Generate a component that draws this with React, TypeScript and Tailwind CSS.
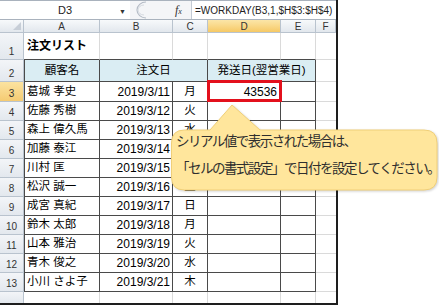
const orders = [
  ["葛城 孝史", "2019/3/11", "月"],
  ["佐藤 秀樹", "2019/3/12", "火"],
  ["森上 偉久馬", "2019/3/13", "水"],
  ["加藤 泰江", "2019/3/14", "木"],
  ["川村 匡", "2019/3/15", "金"],
  ["松沢 誠一", "2019/3/16", "土"],
  ["成宮 真紀", "2019/3/17", "日"],
  ["鈴木 太郎", "2019/3/18", "月"],
  ["山本 雅治", "2019/3/19", "火"],
  ["青木 俊之", "2019/3/20", "水"],
  ["小川 さよ子", "2019/3/21", "木"],
];

const cell = "box-border shrink-0 flex items-center border-r border-b";
const dark = "border-[#4a4a4a]";
const light = "border-[#dadada]";

function RowHead({ n, active = false }: { n: number; active?: boolean }) {
  return (
    <div
      className={`box-border w-[24px] shrink-0 flex items-end justify-center pb-[1px] border-r border-b border-[#b9c3ce] text-[10px] leading-[12px] text-[#333] ${
        active
          ? "bg-gradient-to-b from-[#fbe3a0] to-[#f5cb72]"
          : "bg-gradient-to-b from-[#f3f5f8] to-[#e3e8ee]"
      }`}
    >
      {n}
    </div>
  );
}

function ColHead({ label, w, active = false }: { label: string; w: string; active?: boolean }) {
  return (
    <div
      className={`box-border ${w} shrink-0 flex items-center justify-center border-r border-b border-[#b9c3ce] text-[10px] text-[#333] ${
        active
          ? "bg-gradient-to-b from-[#fbe6a8] to-[#f6c964]"
          : "bg-gradient-to-b from-[#f7f9fb] to-[#e2e7ed]"
      }`}
    >
      {label}
    </div>
  );
}

function DataRow({ n, name, date, day, first }: { n: number; name: string; date: string; day: string; first: boolean }) {
  return (
    <div className={`flex ${first ? "h-[20px]" : "h-[19px]"}`}>
      <RowHead n={n} active={first} />
      <div className={`${cell} ${dark} w-[76px] border-l pl-[2px] text-[11.5px]`}>{name}</div>
      <div className={`${cell} ${dark} w-[73px] justify-end pr-[2px] text-[12px]`}>{date}</div>
      <div className={`${cell} ${dark} w-[35px] justify-center text-[11.5px]`}>{day}</div>
      <div className={`${cell} ${dark} relative w-[73px] justify-end pr-[3px] text-[12px]`}>
        {first && (
          <>
            43536
            {/* selected cell */}
            <div className="absolute -left-[1px] -top-[2px] -right-[2px] -bottom-[1px] border-[3px] border-[#e3101c]" />
          </>
        )}
      </div>
      <div className={`${cell} ${dark} w-[35px]`} />
      <div className={`${cell} ${light} w-[20px] border-r-0`} />
    </div>
  );
}

export default function App() {
  return (
    <div className="relative w-[439px] h-[305px] overflow-hidden bg-white text-black font-['Liberation_Sans','Noto_Sans_CJK_JP',sans-serif]">
      <div className="box-border w-[338px] h-[305px] flex flex-col border-r-2 border-b-2 border-[#1e1e1e]">
        {/* formula bar */}
        <div className="box-border h-[20px] flex items-center border-t border-b border-[#a9b2bd] bg-[#f4f5f7]">
          <div className="relative h-full w-[130px] flex items-center justify-center bg-white text-[11px] text-[#222]">
            D3
            <span className="absolute right-[4px] top-[6px] text-[7px] text-[#333]">▼</span>
          </div>
          <svg width="16" height="18" viewBox="0 0 16 18" className="ml-[2px] shrink-0">
            <path d="M14 1 A 9 8 0 0 0 14 17" fill="none" stroke="#b5bcc6" strokeWidth="1.2" />
            <path d="M12 4 A 6 5 0 0 0 12 14" fill="none" stroke="#d5dae0" strokeWidth="1" />
          </svg>
          <div className="ml-[27px] w-[16px] shrink-0 font-['Liberation_Serif',serif] italic text-[12px] text-[#333] leading-none">
            f<span className="text-[8px]">x</span>
          </div>
          <div className="box-border h-full flex-1 flex items-center pl-[3px] border-l border-[#c4cbd4] bg-white text-[10px] text-[#222]">
            =WORKDAY(B3,1,$H$3:$H$4)
          </div>
        </div>

        {/* column headers */}
        <div className="flex h-[13px]">
          <div className="relative box-border w-[24px] shrink-0 border-r border-b border-[#b9c3ce] bg-gradient-to-b from-[#f7f9fb] to-[#e2e7ed]">
            <svg width="8" height="8" viewBox="0 0 8 8" className="absolute right-[2px] bottom-[2px]">
              <path d="M8 0 L8 8 L0 8 Z" fill="#c7ced7" />
            </svg>
          </div>
          <ColHead label="A" w="w-[76px]" />
          <ColHead label="B" w="w-[73px]" />
          <ColHead label="C" w="w-[35px]" />
          <ColHead label="D" w="w-[73px]" active />
          <ColHead label="E" w="w-[35px]" />
          <ColHead label="F" w="w-[20px]" />
        </div>

        {/* row 1 */}
        <div className="flex h-[27px]">
          <RowHead n={1} />
          <div className={`${cell} ${light} border-b-[#4a4a4a] w-[76px] pl-[3px] text-[12px] font-bold`}>注文リスト</div>
          <div className={`${cell} ${light} border-b-[#4a4a4a] w-[73px]`} />
          <div className={`${cell} ${light} border-b-[#4a4a4a] w-[35px]`} />
          <div className={`${cell} ${light} border-b-[#4a4a4a] w-[73px]`} />
          <div className={`${cell} ${light} border-b-[#4a4a4a] w-[35px]`} />
          <div className={`${cell} ${light} w-[20px] border-r-0`} />
        </div>

        {/* row 2 */}
        <div className="flex h-[22px]">
          <RowHead n={2} />
          <div className={`${cell} ${dark} w-[76px] border-l justify-center bg-[#daedf3] text-[11.5px]`}>顧客名</div>
          <div className={`${cell} ${dark} w-[108px] justify-center bg-[#daedf3] text-[11.5px]`}>注文日</div>
          <div className={`${cell} ${dark} w-[108px] justify-center bg-[#daedf3] text-[11.5px]`}>発送日(翌営業日)</div>
          <div className={`${cell} ${light} w-[20px] border-r-0`} />
        </div>

        {orders.map(([name, date, day], i) => (
          <DataRow key={date} n={i + 3} name={name} date={date} day={day} first={i === 0} />
        ))}

        {/* row 14 */}
        <div className="flex flex-1">
          <div className="box-border w-[24px] shrink-0 border-r border-[#b9c3ce] bg-gradient-to-b from-[#f3f5f8] to-[#e3e8ee]" />
          <div className={`${cell} ${light} border-b-0 w-[76px]`} />
          <div className={`${cell} ${light} border-b-0 w-[73px]`} />
          <div className={`${cell} ${light} border-b-0 w-[35px]`} />
          <div className={`${cell} ${light} border-b-0 w-[73px]`} />
          <div className={`${cell} ${light} border-b-0 w-[35px]`} />
          <div className="w-[20px]" />
        </div>
      </div>

      {/* callout */}
      <div className="absolute left-[170px] top-[103px] w-[269px] h-[89px]">
        <svg width="269" height="89" viewBox="0 0 269 89" className="absolute inset-0 drop-shadow-[1px_1px_1px_rgba(0,0,0,0.18)]">
          <path
            d="M14.5 27 H40 L62 2 L90 27 H254 Q267 27 267 40 V74 Q267 87 254 87 H14.5 Q1.5 87 1.5 74 V40 Q1.5 27 14.5 27 Z"
            fill="#ffe69c"
            stroke="#f0cf78"
            strokeWidth="1"
          />
        </svg>
        <div className="absolute left-[6px] top-[24px] flex flex-col leading-[27px] text-[13.5px] tracking-[-1.5px] text-[#2e2e2e] font-['Noto_Sans_CJK_JP',sans-serif] whitespace-nowrap">
          <span>シリアル値で表示された場合は、</span>
          <span>「セルの書式設定」で日付を設定してください。</span>
        </div>
      </div>
    </div>
  );
}
